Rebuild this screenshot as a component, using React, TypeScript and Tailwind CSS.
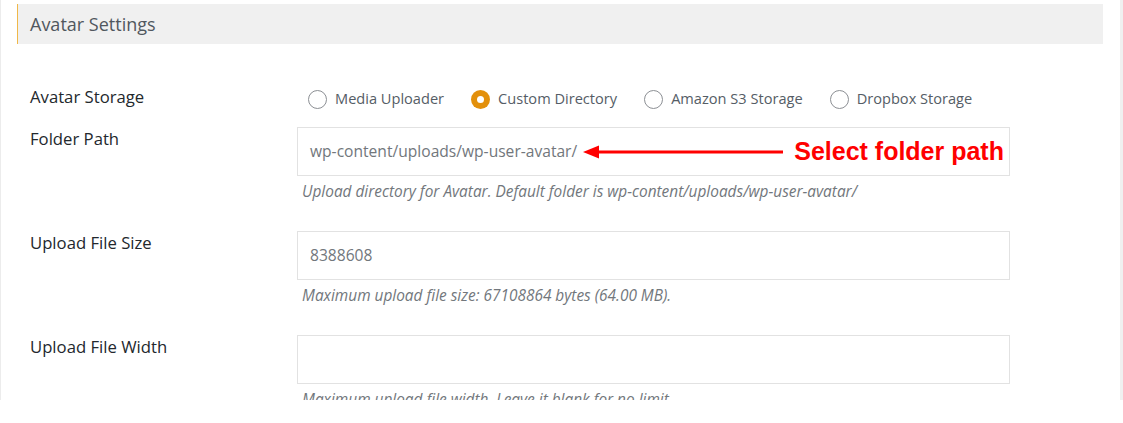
import React from "react";

const font = { fontFamily: '"Open Sans", "Noto Sans", sans-serif' };

function Radio({ label, checked }: { label: string; checked?: boolean }) {
  return (
    <label className="flex items-center gap-[8px] text-[14.6px] text-[#555d66]">
      {checked ? (
        <span className="w-[19px] h-[19px] rounded-full bg-[#e3900b] flex items-center justify-center">
          <span className="w-[7px] h-[7px] rounded-full bg-white" />
        </span>
      ) : (
        <span className="w-[19px] h-[19px] rounded-full border border-[#8c8f94] bg-white" />
      )}
      <span>{label}</span>
    </label>
  );
}

function Field({
  label,
  value,
  desc,
  children,
}: {
  label: string;
  value?: string;
  desc: string;
  children?: React.ReactNode;
}) {
  return (
    <div className="flex">
      <div className="w-[280px] pl-[13px] text-[16.7px] leading-[24px] text-[#23282d]">{label}</div>
      <div className="w-[713px]">
        <div className="h-[49px] border border-[#e2e2e2] bg-white flex items-center pl-[12px] text-[15.6px] text-[#72777c]">
          <span>{value}</span>
          {children}
        </div>
        <div className="mt-[6px] h-[20px] leading-[20px] italic text-[15.4px] text-[#72777c] pl-[5px] whitespace-nowrap">
          {desc}
        </div>
      </div>
    </div>
  );
}

export default function App() {
  return (
    <div className="w-[1123px] h-[423px] bg-white" style={font}>
      <div className="w-[1123px] h-[400px] overflow-hidden border-l border-[#ececec] border-r-[3px] border-r-[#f0f0f0] pl-[16px] pr-[17px] pt-[4px]">
        <div className="h-[40px] bg-[#f0f0f0] border-l border-[#f0b849] flex items-center pl-[12px] text-[18px] text-[#50575e]">
          Avatar Settings
        </div>
        <div className="mt-[41px] flex h-[24px] items-center">
          <div className="w-[280px] pl-[13px] text-[16.7px] leading-[24px] text-[#23282d]">Avatar Storage</div>
          <div className="flex items-center mt-[4px] pl-[11px] gap-[27px]">
            <Radio label="Media Uploader" />
            <Radio label="Custom Directory" checked />
            <Radio label="Amazon S3 Storage" />
            <Radio label="Dropbox Storage" />
          </div>
        </div>
        <div className="mt-[18px] flex flex-col gap-[29px]">
          <Field
            label="Folder Path"
            value="wp-content/uploads/wp-user-avatar/"
            desc="Upload directory for Avatar. Default folder is wp-content/uploads/wp-user-avatar/"
          >
            <svg width="200" height="14" viewBox="0 0 200 14" className="ml-[6px] shrink-0">
              <polygon points="0,7 16,0.5 16,13.5" fill="#ff0000" />
              <rect x="14" y="5.5" width="186" height="3" fill="#ff0000" />
            </svg>
            <span
              className="ml-[11px] text-[25px] font-bold text-[#ff0000] leading-none"
              style={{ fontFamily: '"Liberation Sans", Arial, sans-serif' }}
            >
              Select folder path
            </span>
          </Field>
          <Field
            label="Upload File Size"
            value="8388608"
            desc="Maximum upload file size: 67108864 bytes (64.00 MB)."
          />
          <Field label="Upload File Width" desc="Maximum upload file width. Leave it blank for no limit." />
        </div>
      </div>
    </div>
  );
}
